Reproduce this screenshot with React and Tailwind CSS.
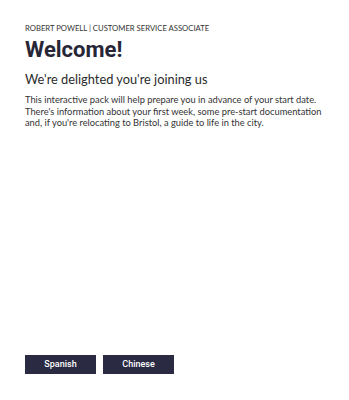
export default function App() {
  return (
    <div className="flex h-[400px] w-full flex-col bg-white px-[25px] text-[#2b2b3a]" style={{ fontFamily: "Lato, 'Open Sans', sans-serif" }}>
      <div className="pt-[23px]">
        <p className="text-[7.7px] leading-[10px] text-[#333]">ROBERT POWELL | CUSTOMER SERVICE ASSOCIATE</p>
        <h1 className="mt-[4px] text-[22px] font-bold leading-[26px] text-[#262637]" style={{ fontFamily: "Roboto, sans-serif" }}>
          Welcome!
        </h1>
        <h2 className="mt-[8px] text-[12.8px] leading-[16px] text-[#2b2b2b]">We're delighted you're joining us</h2>
        <p className="mt-[7px] text-[9.3px] leading-[11.5px] text-[#333]">
          This interactive pack will help prepare you in advance of your start date. There's information about your first week, some pre-start documentation and, if you're relocating to Bristol, a guide to life in the city.
        </p>
      </div>
      <div className="mt-auto mb-[26px] flex gap-[7px]" style={{ fontFamily: "Roboto, sans-serif" }}>
        <button className="h-[19px] w-[71px] bg-[#2a2a43] text-[9px] font-medium text-white">Spanish</button>
        <button className="h-[19px] w-[71px] bg-[#2a2a43] text-[9px] font-medium text-white">Chinese</button>
      </div>
    </div>
  );
}
